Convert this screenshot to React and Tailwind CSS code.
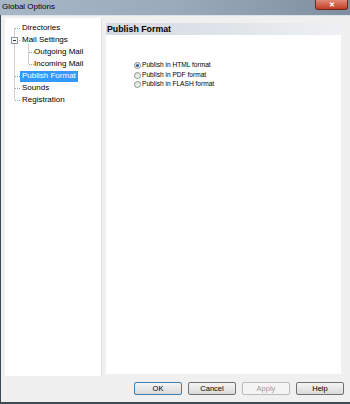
const FONT = { fontFamily: '"Liberation Sans", Arial, sans-serif' };

const treeRows = [
    { label: 'Directories', depth: 0 },
    { label: 'Mail Settings', depth: 0 },
    { label: 'Outgoing Mail', depth: 1 },
    { label: 'Incoming Mail', depth: 1 },
    { label: 'Publish Format', depth: 0, selected: true },
    { label: 'Sounds', depth: 0 },
    { label: 'Registration', depth: 0 },
];

const formats = [
    { label: 'Publish in HTML format', checked: true },
    { label: 'Publish in PDF format', checked: false },
    { label: 'Publish in FLASH format', checked: false },
];

function TreeLines() {
    // dotted connectors, rows are 12px tall starting at y=4
    const dot = { stroke: '#a0a0a0', strokeWidth: 1, strokeDasharray: '1 1' };
    const cy = (i) => 4 + i * 12 + 6.5;
    return (
        <svg className="absolute inset-0 pointer-events-none" width="97" height="140">
            <line x1="9.5" y1={cy(0)} x2="9.5" y2={cy(6)} {...dot} />
            {[0, 1, 4, 5, 6].map((i) => (
                <line key={i} x1="10" y1={cy(i)} x2="16" y2={cy(i)} {...dot} />
            ))}
            <line x1="23.5" y1={cy(1) + 4} x2="23.5" y2={cy(3)} {...dot} />
            {[2, 3].map((i) => (
                <line key={i} x1="24" y1={cy(i)} x2="29" y2={cy(i)} {...dot} />
            ))}
            {/* collapse box */}
            <rect x="6.5" y={cy(1) - 3} width="6" height="6" fill="#fff" stroke="#8a9aa8" />
            <line x1="8" y1={cy(1)} x2="11" y2={cy(1)} stroke="#333" />
        </svg>
    );
}

function Radio({ checked }) {
    return (
        <span className="w-[7px] h-[7px] rounded-full border border-[#8e8f8f] bg-gradient-to-br from-[#dcdcdc] to-[#fafafa] flex items-center justify-center shrink-0">
            {checked && <span className="w-[3px] h-[3px] rounded-full bg-[#1f5fa8]" />}
        </span>
    );
}

function DialogButton({ children, primary, disabled }) {
    return (
        <button
            className={`w-[48px] h-[13px] rounded-[2px] border text-[7.5px] leading-none flex items-center justify-center ${
                disabled
                    ? 'border-[#b8bcc0] bg-[#f4f4f4] text-[#9a9a9a]'
                    : primary
                    ? 'border-[#3c7fb1] bg-gradient-to-b from-[#f4f4f4] to-[#dadada] text-black'
                    : 'border-[#707070] bg-gradient-to-b from-[#f4f4f4] to-[#dadada] text-black'
            }`}
        >
            {children}
        </button>
    );
}

export default function App() {
    return (
        <div className="w-[350px] h-[404px] flex flex-col bg-[#3c4a56] overflow-hidden" style={FONT}>

            {/* Title bar */}
            <div className="h-[15px] flex justify-between bg-gradient-to-r from-[#a7b7c6] via-[#9aaabb] to-[#7f8f9f]">
                <span className="pl-[2px] pt-[3px] text-[8px] leading-none text-black">Global Options</span>
                <span className="mr-[2px] w-[33px] h-[10px] rounded-b-[3px] border border-t-0 border-[#6e2a20] bg-gradient-to-b from-[#e08a76] to-[#c13b25] flex items-center justify-center text-white text-[7px] font-bold leading-none">
                    ✕
                </span>
            </div>

            {/* Body */}
            <div className="flex-1 ml-[1px] mb-[2px] bg-[#f0f0f0] border-t border-[#dde3ea] flex flex-col">
                <div className="flex-1 flex pl-[4px] pr-[9px]">

                    {/* Tree */}
                    <div className="relative w-[97px] mt-[2px] mb-[0px] bg-white pt-[4px] border-r border-[#e2e2e2]">
                        <TreeLines />
                        {treeRows.map((row) => (
                            <div key={row.label} className={`relative h-[12px] flex items-center ${row.depth ? 'pl-[27px]' : 'pl-[15px]'}`}>
                                <span
                                    className={`px-[2px] h-[11px] flex items-center text-[8px] leading-none ${
                                        row.selected ? 'bg-[#3399ff] text-white' : 'text-black'
                                    }`}
                                >
                                    {row.label}
                                </span>
                            </div>
                        ))}
                    </div>

                    {/* Settings page */}
                    <div className="flex-1 ml-[4px] mt-[7px] mb-[2px] bg-white flex flex-col">
                        <div className="h-[12px] flex items-center pl-[1px] bg-gradient-to-r from-[#d3dae3] via-[#dfe4ea] to-[#eef0f3] text-[8.8px] font-bold leading-none text-black">
                            Publish Format
                        </div>
                        <div className="pt-[27px] pl-[28px] flex flex-col gap-[2.5px]">
                            {formats.map((f) => (
                                <label key={f.label} className="flex items-center gap-[1px] h-[7px] text-[6.6px] leading-none text-black">
                                    <Radio checked={f.checked} />
                                    <span>{f.label}</span>
                                </label>
                            ))}
                        </div>
                    </div>
                </div>

                {/* Buttons */}
                <div className="h-[26px] flex justify-end items-center gap-[6px] pr-[6px] pb-[1px]">
                    <DialogButton primary>OK</DialogButton>
                    <DialogButton>Cancel</DialogButton>
                    <DialogButton disabled>Apply</DialogButton>
                    <DialogButton>Help</DialogButton>
                </div>
            </div>
        </div>
    );
}
